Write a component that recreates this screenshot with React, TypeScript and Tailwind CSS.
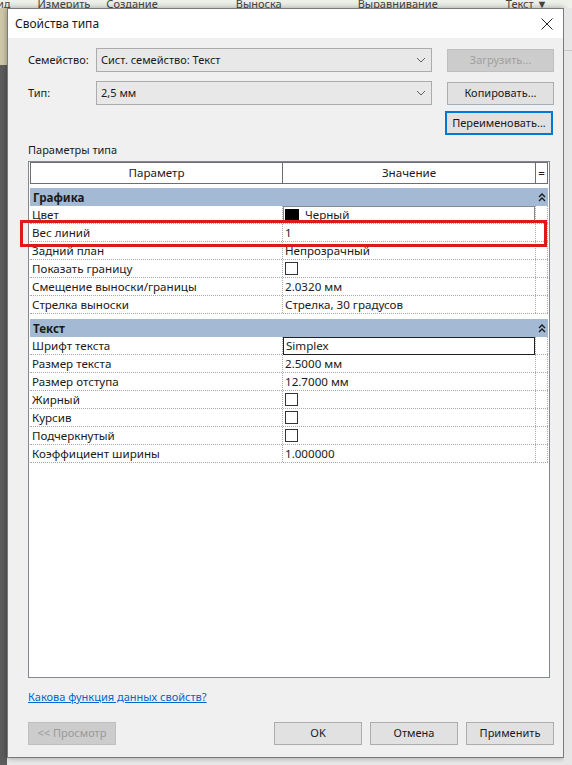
import React from "react";

const line = "border-[#a8a8a8] border-dotted";

function Chevron() {
  return (
    <svg width="10" height="6" viewBox="0 0 10 6" className="text-[#606060]">
      <path d="M1 1l4 4 4-4" fill="none" stroke="currentColor" strokeWidth="1" />
    </svg>
  );
}

function Collapse() {
  return (
    <svg width="8" height="9" viewBox="0 0 8 9">
      <path d="M1 4l3-3 3 3M1 8l3-3 3 3" fill="none" stroke="#1a1a1a" strokeWidth="1.3" />
    </svg>
  );
}

function Check() {
  return <div className="ml-[2px] h-[13px] w-[13px] border border-[#333] bg-white" />;
}

function Row({ label, children }: { label: string; children?: React.ReactNode }) {
  return (
    <div className={`flex h-[18px] border-b ${line}`}>
      <div className={`w-[253px] shrink-0 border-r ${line} pl-[2px] leading-[18px] whitespace-nowrap overflow-hidden`}>
        {label}
      </div>
      <div className={`w-[253px] shrink-0 border-r ${line} flex items-center leading-[18px] whitespace-nowrap`}>
        {children}
      </div>
      <div className={`w-[12px] shrink-0 border-r ${line}`} />
    </div>
  );
}

function Group({ title, first }: { title: string; first?: boolean }) {
  return (
    <div className={`${first ? "mt-[4px]" : "mt-[5px]"} flex h-[18px] items-center bg-[#a3b9d4]`}>
      <div className="w-[506px] pl-[3px] pt-[1px] font-bold text-[#1a1a1a]">{title}</div>
      <div className="flex w-[12px] justify-center">
        <Collapse />
      </div>
    </div>
  );
}

function Btn({ children, disabled }: { children: React.ReactNode; disabled?: boolean }) {
  const base = "flex h-[23px] w-[88px] items-center justify-center";
  if (disabled) return <div className={`${base} border border-[#bfbfbf] bg-[#cccccc] text-[#9a9a9a]`}>{children}</div>;
  return <div className={`${base} border border-[#adadad] bg-[#e1e1e1]`}>{children}</div>;
}

export default function App() {
  return (
    <div className="relative h-[765px] w-[572px] overflow-hidden bg-[#e9e9e9] font-['Noto_Sans',sans-serif] text-[11px] text-[#1a1a1a]">
      {/* background ribbon */}
      <div className="flex h-[8px] overflow-hidden bg-[#eef0ea] text-[11px] leading-[12px] text-[#444]">
        <span className="-ml-[3px] -mt-[2px]">ид</span>
        <span className="-mt-[2px] ml-[27px]">Измерить</span>
        <span className="-mt-[2px] ml-[16px]">Создание</span>
        <span className="-mt-[2px] ml-[78px]">Выноска</span>
        <span className="-mt-[2px] ml-[76px]">Выравнивание</span>
        <span className="-mt-[2px] ml-[68px]">Текст ▼</span>
      </div>

      <div className="flex">
        {/* left app strip */}
        <div className="flex w-[7px] flex-col">
          <div className="h-[57px] bg-[#cfc8a8]" />
          <div className="h-[700px] bg-[#5c5c5c]" />
        </div>

        {/* dialog */}
        <div className="flex h-[750px] w-[557px] flex-col border border-[#7a7a7a] bg-[#f0f0f0] shadow-[0_0_6px_rgba(0,0,0,0.35)]">
          <div className="flex h-[29px] shrink-0 items-center justify-between bg-white pl-[7px] pr-[10px] text-[12px]">
            <span>Свойства типа</span>
            <svg width="12" height="12" viewBox="0 0 12 12">
              <path d="M0.5 0.5l11 11M11.5 0.5l-11 11" stroke="#222" strokeWidth="1" />
            </svg>
          </div>

          <div className="flex flex-1 flex-col pl-[20px] pr-[9px] pt-[10px]">
            <div className="flex items-center">
              <div className="w-[68px]">Семейство:</div>
              <div className="flex h-[24px] w-[336px] items-center justify-between border border-[#acacac] bg-[#e8e8e8] pl-[4px] pr-[5px]">
                <span>Сист. семейство: Текст</span>
                <Chevron />
              </div>
              <div className="ml-[15px] flex h-[23px] w-[107px] items-center justify-center border border-[#bfbfbf] bg-[#cccccc] text-[#a0a0a0]">
                Загрузить...
              </div>
            </div>

            <div className="mt-[9px] flex items-center">
              <div className="w-[68px]">Тип:</div>
              <div className="flex h-[24px] w-[336px] items-center justify-between border border-[#acacac] bg-[#e8e8e8] pl-[4px] pr-[5px]">
                <span>2,5 мм</span>
                <Chevron />
              </div>
              <div className="ml-[15px] flex h-[23px] w-[107px] items-center justify-center border border-[#adadad] bg-[#e1e1e1]">
                Копировать...
              </div>
            </div>

            <div className="mt-[6px] flex justify-end pr-[1px]">
              <div className="flex h-[24px] w-[108px] items-center justify-center border-2 border-[#0078d7] bg-[#e1e1e1]">
                Переименовать...
              </div>
            </div>

            <div className="mt-[7px] leading-[16px]">Параметры типа</div>

            <div className="mt-[3px] flex h-[517px] w-[522px] flex-col border border-[#828790] bg-white px-[1px] text-[11.6px]">
              <div className="flex h-[22px] shrink-0">
                <div className="flex w-[253px] items-center justify-center border border-[#6e6e6e]">Параметр</div>
                <div className="flex w-[253px] items-center justify-center border-y border-r border-[#6e6e6e]">Значение</div>
                <div className="flex w-[12px] items-center justify-center border-y border-r border-[#6e6e6e]">=</div>
              </div>

              <Group title="Графика" first />
              <Row label="Цвет">
                <div className="flex h-[17px] w-full items-center border border-[#8a8a8a] bg-white">
                  <div className="ml-[1px] mr-[6px] h-[11px] w-[14px] bg-black" />
                  <span>Черный</span>
                </div>
              </Row>
              <Row label="Вес линий">
                <span className="pl-[2px]">1</span>
              </Row>
              <Row label="Задний план">
                <span className="pl-[2px]">Непрозрачный</span>
              </Row>
              <Row label="Показать границу">
                <Check />
              </Row>
              <Row label="Смещение выноски/границы">
                <span className="pl-[2px]">2.0320 мм</span>
              </Row>
              <Row label="Стрелка выноски">
                <span className="pl-[2px]">Стрелка, 30 градусов</span>
              </Row>

              <Group title="Текст" />
              <Row label="Шрифт текста">
                <div className="flex h-[18px] w-full items-center border border-[#222] pl-[2px]">Simplex</div>
              </Row>
              <Row label="Размер текста">
                <span className="pl-[2px]">2.5000 мм</span>
              </Row>
              <Row label="Размер отступа">
                <span className="pl-[2px]">12.7000 мм</span>
              </Row>
              <Row label="Жирный">
                <Check />
              </Row>
              <Row label="Курсив">
                <Check />
              </Row>
              <Row label="Подчеркнутый">
                <Check />
              </Row>
              <Row label="Коэффициент ширины">
                <span className="pl-[2px]">1.000000</span>
              </Row>
            </div>

            <div className="mt-[11px] leading-[16px] text-[#0066cc] underline">Какова функция данных свойств?</div>

            <div className="mt-[17px] flex">
              <Btn disabled>&lt;&lt; Просмотр</Btn>
              <div className="flex-1" />
              <div className="flex gap-[8px]">
                <Btn>OK</Btn>
                <Btn>Отмена</Btn>
                <Btn>Применить</Btn>
              </div>
            </div>
          </div>
        </div>

        {/* right app strip */}
        <div className="flex flex-1 flex-col bg-[#e6e6e6]">
          <div className="mt-[42px] h-[1px] bg-[#c8c8c8]" />
        </div>
      </div>

      {/* annotation highlight */}
      <div className="absolute left-[20px] top-[220px] h-[27px] w-[527px] border-[3px] border-[#e0181b]" />
    </div>
  );
}
